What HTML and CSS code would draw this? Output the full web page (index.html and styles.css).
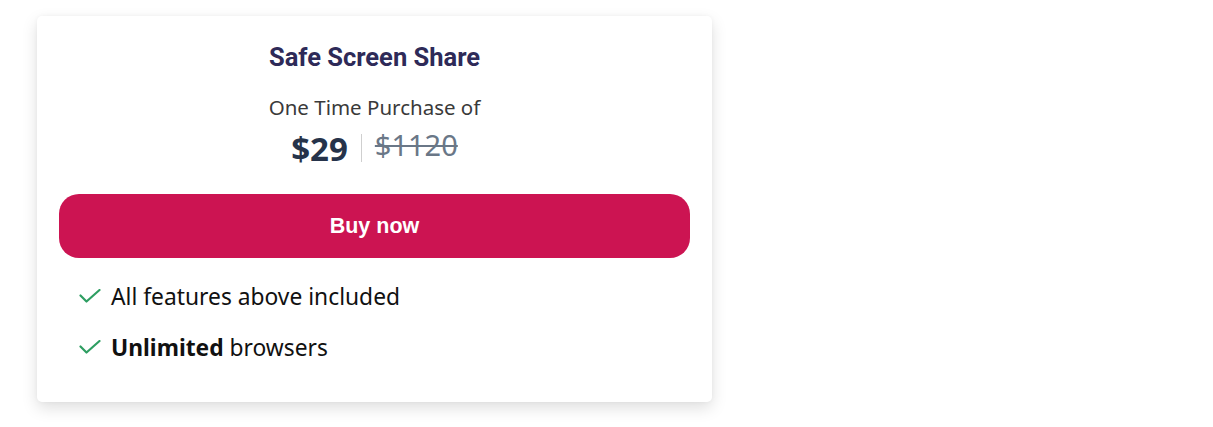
FILE: index.html
```html
<!DOCTYPE html>
<html lang="en">
<head>
<meta charset="utf-8">
<title>Safe Screen Share</title>
<link rel="stylesheet" href="styles.css">
</head>
<body>
<div class="page">
  <div class="card">
    <h2 class="title">Safe Screen Share</h2>
    <p class="subtitle">One Time Purchase of</p>
    <div class="price">
      <span class="now">$29</span>
      <span class="divider"></span>
      <span class="was">$1120</span>
    </div>
    <button class="buy">Buy now</button>
    <ul class="features">
      <li><svg class="check" viewBox="0 0 22 14" width="22" height="14"><path d="M1.5 6.5 L7.5 12.5 L20.5 1" fill="none" stroke="#2e9e62" stroke-width="2.2" stroke-linecap="round" stroke-linejoin="round"/></svg><span>All features above included</span></li>
      <li><svg class="check" viewBox="0 0 22 14" width="22" height="14"><path d="M1.5 6.5 L7.5 12.5 L20.5 1" fill="none" stroke="#2e9e62" stroke-width="2.2" stroke-linecap="round" stroke-linejoin="round"/></svg><span><b>Unlimited</b> browsers</span></li>
    </ul>
  </div>
</div>
</body>
</html>
```

FILE: styles.css
```css
html, body {
  margin: 0;
  padding: 0;
  background: #ffffff;
}
.page {
  padding: 16px 0 0 37px;
  min-height: 427px;
  box-sizing: border-box;
}
.card {
  width: 675px;
  height: 386px;
  box-sizing: border-box;
  background: #ffffff;
  border-radius: 5px;
  box-shadow: 0 6px 16px rgba(0, 0, 0, 0.13), 0 0 4px rgba(0,0,0,0.04);
  padding: 26px 22px 0 22px;
  display: flex;
  flex-direction: column;
  align-items: center;
}
.title {
  margin: 0;
  font-family: Roboto, "Liberation Sans", sans-serif;
  font-weight: 700;
  font-size: 25.5px;
  line-height: 30px;
  color: #2e2a58;
}
.subtitle {
  margin: 22px 0 0 0;
  font-family: "Noto Sans", sans-serif;
  font-size: 20.5px;
  line-height: 26px;
  color: #3a3a3a;
}
.price {
  margin-top: 10px;
  display: flex;
  align-items: center;
  gap: 13px;
  height: 36px;
}
.now {
  font-family: "Noto Sans", sans-serif;
  font-weight: 700;
  font-size: 33px;
  color: #26334a;
}
.divider {
  width: 1px;
  height: 28px;
  background: #cfcfcf;
}
.was {
  font-family: "Noto Sans", sans-serif;
  font-size: 29px;
  color: #6a7787;
  text-decoration: line-through;
  text-decoration-thickness: 2px;
  margin-top: -8px;
}
.buy {
  margin-top: 28px;
  width: 100%;
  height: 64px;
  flex: none;
  border: none;
  border-radius: 20px;
  background: #cc1452;
  color: #ffffff;
  font-family: "Liberation Sans", Arial, sans-serif;
  font-weight: 700;
  font-size: 21.5px;
  cursor: pointer;
}
.features {
  list-style: none;
  margin: 24px 0 0 0;
  padding: 0 0 0 20px;
  align-self: stretch;
  display: flex;
  flex-direction: column;
  gap: 21px;
}
.features li {
  display: flex;
  align-items: center;
  gap: 10px;
  font-family: "Noto Sans", sans-serif;
  font-size: 22.8px;
  line-height: 30px;
  color: #111111;
}
.check {
  flex: none;
  margin-top: -2px;
}
```
